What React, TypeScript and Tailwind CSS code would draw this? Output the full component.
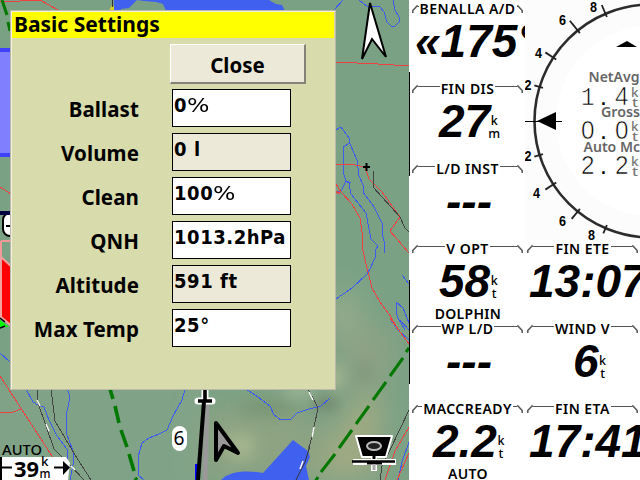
import type { ReactNode } from "react";

const UI = "font-['Noto_Sans',sans-serif]";

function Label({ x, y, w, size, children, fill = "#000", weight = 700, family = "Noto Sans, sans-serif" }: {
  x: number; y: number; w: number; size: number; children: ReactNode; fill?: string; weight?: number; family?: string;
}) {
  return (
    <text x={x} y={y} textLength={w} lengthAdjust="spacingAndGlyphs" fontSize={size} fontWeight={weight} fontFamily={family} fill={fill}>
      {children}
    </text>
  );
}

function MapView() {
  return (
    <svg className="block h-[480px] w-[409px]" viewBox="0 0 409 480" fill="none">
      <defs>
        <filter id="soft" x="-50%" y="-50%" width="200%" height="200%"><feGaussianBlur stdDeviation="14" /></filter>
        <filter id="soft2" x="-50%" y="-50%" width="200%" height="200%"><feGaussianBlur stdDeviation="7" /></filter>
      </defs>
      <rect width="409" height="480" fill="#7ba185" />
      <rect y="385" width="200" height="95" fill="#80a388" />
      <g filter="url(#soft)">
        <path d="M200 410L290 400L330 440L380 380L385 480L200 480Z" fill="#8da382" />
        <path d="M318 480L335 430L360 390L385 400L365 480Z" fill="#a0aa83" />
        <ellipse cx="344" cy="315" rx="14" ry="26" fill="#9aae8b" />
        <ellipse cx="368" cy="355" rx="26" ry="30" fill="#8fa284" />
      </g>
      <g filter="url(#soft2)">
        <ellipse cx="240" cy="446" rx="16" ry="14" fill="#a3b48e" />
        <ellipse cx="300" cy="391" rx="18" ry="6" fill="#a0b895" />
        <ellipse cx="336" cy="377" rx="7" ry="14" fill="#acb890" />
        <ellipse cx="325" cy="403" rx="13" ry="6" fill="#6e7e68" />
        <ellipse cx="267" cy="408" rx="30" ry="8" fill="#789675" />
        <ellipse cx="365" cy="372" rx="9" ry="12" fill="#84987c" />
      </g>
      <path d="M114 0H269L276 4L282 5L285 11H114Z" fill="#4060f0" />
      <path d="M121 11V9L129 8L137 0L144 1L156 2L163 4L166 11Z" fill="#7ba185" />
      <path d="M109.500 10L112 5L114 6V10Z" fill="#d8cf22" />
      <path d="M112.500 0V7" stroke="#333" />
      <path d="M0 2L40 0L58 10" stroke="#f04040" shapeRendering="crispEdges" />
      <path d="M2 0L7 15M8 22L10 31" stroke="#007800" strokeWidth="3" />
      <path d="M-4 50H20V155H-4Z" fill="#8080ff" stroke="#4040ff" strokeWidth="4" />
      <g stroke="#3c5cf0" shapeRendering="crispEdges">
        <path d="M334 10L343 0M359 0L367 6L380 7L384 12L387 22L391 26L395 26L400 21L399 17L395 10L393 0" />
        <path d="M336 130L341 127L349 138L350 144L357 160M350 143L343 147V172L346 181L351 183M357 160L359 176L363 185V192L374 207L382 223L382 233L384 241V253" />
        <path d="M337 191L341 191L346 181L349 183L351 194L366 213L369 229L371 239L378 246L375 251L375 258L370 269L367 274L352 288L336 299" />
        <path d="M402 275L409 284M409 323L403 308L396 302L396 311L398 318L405 330M391 320L398 330L409 340M400 320L409 330M409 442L402 462L398 480" />
        <path d="M0 353L10 362M26 389L33 402L38 405L44 407L49 420L57 436L67 449L68 455L65 470" />
        <path d="M67 389L70 396L69 402L66 416V432L73 451L74 460L70 480" />
        <path d="M185 389L182 400L173 416L167 430L159 434L149 438L142 443L138 457L138 475L144 480" />
        <path d="M246 389L258 397L270 406L274 415L281 420L291 419L297 413L309 409L321 406L330 398" />
      </g>
      <g stroke="#f04040" shapeRendering="crispEdges">
        <path d="M336 62L378 64L409 66M336 164H350L365 167L369 179L382 192L400 217L390 231L409 253" />
        <path d="M336 184L341 192L352 204L360 218L362 232V247L368 272L372 288L380 302L391 317L398 330M390 318L409 344" />
        <path d="M0 187L11 194M0 376L52 456L62 466M0 413L13 412L21 409" />
        <path d="M409 427L395 451L385 480M409 453L397 480" />
      </g>
      <path d="M336 192L340 193" stroke="#f04040" strokeWidth="2" />
      <g stroke="#444" shapeRendering="crispEdges">
        <path d="M374 171L373 187L400 217L405 228L409 232M51 389L55 421L75 455L91 480M37 389L38 403L54 449L70 465L84 480M409 410L390 450L382 466L380 480" />
        <path d="M308 389L317 406L317 413L309 449L296 480" />
      </g>
      <path d="M37 400L40 406M46 424L49 431M309 392L313 400M314 427L312 437M71 466L75 470" stroke="#fff" strokeWidth="1.4" />
      <path d="M110 389L113 399M115 406L119 423M121 430L127 447M129 454L134 471M135 478L137 480" stroke="#007800" strokeWidth="3.6" />
      <path d="M409 348L406 352M403 358L390 376M386 382L373 400M369 406L356 424M352 430L339 448M335 454L321 472M318 477L315 482" stroke="#007800" strokeWidth="3" />
      <path d="M221 480C229 471 247 470 263 473L293 440L308 451L310 457L306 466L309 480Z" fill="#4060f0" />
      <path d="M309 446L309 449L305 462L296 480" stroke="#333" />
      <path d="M303 461L300 469" stroke="#fff" strokeWidth="1.5" />
      <path d="M363 167H370M366.500 163V171" stroke="#000" strokeWidth="2" />
      <path d="M1 241H20M1 241V318" stroke="#f49a9a" strokeWidth="2" />
      <path d="M1 257L14 269V328L1 317Z" fill="#f00" stroke="#f5a0a0" strokeWidth="2" />
      <path d="M0 320L9 327L0 327Z" fill="#0f0" /><path d="M0 318L5 322M5 326L0 328" stroke="#000" strokeWidth="1.5" />
      <rect x="3" y="213" width="16" height="23" rx="7" fill="#fff" stroke="#000" strokeWidth="2" />
      <path d="M0 213H12" stroke="#000040" strokeWidth="4" /><path d="M6 226H12" stroke="#000" strokeWidth="2" />
      <path d="M370 3L386 57L372 39L362 59Z" fill="#fff" stroke="#000" strokeWidth="2" />
      <path d="M207 403L205 480" stroke="#999" strokeWidth="5" />
      <path d="M195 464V480H200V464Z" fill="#00f" />
      <path d="M205 389V401M198 401H212" stroke="#fff" strokeWidth="7" strokeLinecap="round" />
      <path d="M205 389V401M198 401H212" stroke="#000" strokeWidth="3.6" />
      <path d="M204 401L198 480" stroke="#000" strokeWidth="4" />
      <rect x="172" y="426" width="15" height="25" rx="7.500" fill="#fff" />
      <Label x={173.500} y={445} w={11} size={20} weight={400}>6</Label>
      <path d="M216 423L238 453L224 446L216 460Z" fill="#999" stroke="#000" strokeWidth="4" strokeLinejoin="round" />
      <g strokeLinejoin="round">
        <path d="M374 454V471M353 462H396" stroke="#fff" strokeWidth="6" />
        <path d="M356 436H392L386 457H362Z" fill="#000" stroke="#fff" strokeWidth="2" />
        <path d="M352 461.500H395" stroke="#000" strokeWidth="2.500" />
        <path d="M367 463H382" stroke="#000" strokeWidth="3" />
        <ellipse cx="374" cy="446" rx="7" ry="4" fill="#222" stroke="#bbb" strokeWidth="2" />
        <path d="M374 451V459" stroke="#000" strokeWidth="3" />
        <path d="M374 464V470" stroke="#aaa" strokeWidth="3" />
      </g>
      <Label x={2} y={455} w={40} size={13.500} weight={500}>AUTO</Label>
      <path d="M0 457H66L70 463L68 480H0Z" fill="#fff" />
      <path d="M1 457V480" stroke="#000" strokeWidth="2" />
      <path d="M0 467.500H12M54 467.500H65" stroke="#000" strokeWidth="2" />
      <path d="M63 461L70 467.500L63 475Z" fill="#000" />
      <Label x={14} y={477} w={25} size={21}>39</Label>
      <Label x={41} y={466} w={7.500} size={12} weight={500}>k</Label>
      <Label x={39.500} y={478} w={11} size={13} weight={500}>m</Label>
    </svg>
  );
}

const Percent = () => (
  <span className="inline-block origin-left scale-x-[1.18] font-['DejaVu_Sans',sans-serif] font-normal [font-stretch:normal]">%</span>
);

const fields = [
  { name: "Ballast", value: "0", percent: true, ro: false },
  { name: "Volume", value: "0 l", percent: false, ro: true },
  { name: "Clean", value: "100", percent: true, ro: false },
  { name: "QNH", value: "1013.2hPa", percent: false, ro: false },
  { name: "Altitude", value: "591 ft", percent: false, ro: true },
  { name: "Max Temp", value: "25°", percent: false, ro: false },
];

function Settings() {
  return (
    <section className={`absolute left-[10px] top-[10px] h-[380px] w-[326px] border border-[#bdb9aa] bg-[#d8dbab] text-[20.5px] font-bold leading-6 text-black shadow-[inset_1px_1px_0_#f3f0e2] ${UI}`}>
      <h1 className="mt-px ml-px h-[26px] w-[322px] bg-[#ffff00] pl-[2px] text-[21px] leading-[24px]">Basic Settings</h1>
      <button className="mt-[6px] ml-[159px] block h-10 w-[136px] border-t border-l border-r-2 border-b-2 border-t-white border-l-white border-r-[#85827a] border-b-[#85827a] bg-[#ece9d8] pt-[3px] font-bold">
        Close
      </button>
      <div className="mt-[5px] flex flex-col gap-[6px]">
        {fields.map((f) => (
          <div key={f.name} className="flex h-[38px]">
            <label className="w-[128px] pt-[8px] text-right tracking-[0.1px]">{f.name}</label>
            <div className={`ml-[33px] h-[38px] w-[119px] overflow-hidden border border-black pt-[3px] pl-[1px] font-['DejaVu_Sans_Condensed','DejaVu_Sans',sans-serif] text-[20px] tracking-[0.55px] whitespace-nowrap [font-stretch:condensed] ${f.ro ? "bg-[#ece9d8]" : "bg-white"}`}>
              {f.value}{f.percent && <Percent />}
            </div>
          </div>
        ))}
      </div>
    </section>
  );
}

type Box = { title: string; value: string; pad: string; unit?: string; note?: string };

const Corner = ({ flip = false }: { flip?: boolean }) => (
  <svg className={`h-2 w-[6px] shrink-0 ${flip ? "-scale-x-100" : ""}`} viewBox="0 0 6 8" fill="none" stroke="#555" strokeWidth="1.5">
    <path d="M0.800 8V5.500L5 1H6" />
  </svg>
);

function InfoBox({ title, value, pad, unit, note }: Box) {
  return (
    <div className="relative h-20 whitespace-nowrap">
      <div className="ml-[2px] flex h-[18px] w-[111px] items-start">
        <div className="mt-[5px] flex min-w-0 flex-1"><Corner /><i className="mt-[0.5px] h-[1.5px] flex-1 bg-[#555]" /></div>
        <span className={`px-px text-[14px] leading-[17px] font-semibold tracking-[0.45px] ${UI}`}>{title}</span>
        <div className="mt-[5px] flex min-w-0 flex-1"><i className="mt-[0.5px] h-[1.5px] flex-1 bg-[#555]" /><Corner flip /></div>
      </div>
      <div className={`flex h-[46px] ${pad}`}>
        <span className="font-['Liberation_Sans',Arial,sans-serif] text-[46px] leading-[46px] font-bold italic">{value}</span>
        {unit && (
          <span className={`mt-[17px] -ml-px flex w-[10px] flex-col items-center text-[12.5px] leading-[12.5px] font-medium ${UI}`}>
            <span>{unit[0]}</span><span>{unit[1]}</span>
          </span>
        )}
      </div>
      {note && <div className={`w-[116px] pt-px text-center text-[14px] leading-[17px] font-semibold tracking-[0.3px] ${UI}`}>{note}</div>}
    </div>
  );
}

const left: Box[] = [
  { title: "BENALLA A/D", value: "«175°", pad: "pl-[5px]" },
  { title: "FIN DIS", value: "27", pad: "pl-[29px]", unit: "km" },
  { title: "L/D INST", value: "---", pad: "pl-[36px]" },
  { title: "V OPT", value: "58", pad: "pl-[29px]", unit: "kt", note: "DOLPHIN" },
  { title: "WP L/D", value: "---", pad: "pl-[36px]" },
  { title: "MACCREADY", value: "2.2", pad: "pl-[23px]", unit: "kt", note: "AUTO" },
];
const right: Box[] = [
  { title: "FIN ETE", value: "13:07", pad: "pl-[4px]" },
  { title: "WIND V", value: "6", pad: "pl-[48px]", unit: "kt" },
  { title: "FIN ETA", value: "17:41", pad: "pl-[4px]" },
];

const readouts = [
  { y: 105, d: "1.4" },
  { y: 139, d: "0.0" },
  { y: 174, d: "2.2" },
];
const marks = [
  { t: "8", x: 65, y: 12, a: 67, o: 0 }, { t: "6", x: 34, y: 25, a: 51, o: -3 }, { t: "4", x: 10, y: 58, a: 33, o: 0 }, { t: "2", x: -0.5, y: 90, a: 17, o: 4 },
  { t: "2", x: -0.5, y: 161, a: -17, o: 4 }, { t: "4", x: 8, y: 198, a: -33, o: 0 }, { t: "6", x: 34, y: 226, a: -51, o: 0 }, { t: "8", x: 63, y: 239.5, a: -67, o: 4 },
];

function Vario() {
  return (
    <svg className="block h-60 w-[115px] bg-[#fcfcfc]" viewBox="0 0 115 240" fill="none">
      <circle cx="126" cy="121" r="95" fill="#fff" />
      <circle cx="126" cy="121" r="116.500" stroke="#2c2c2c" strokeWidth="2.600" />
      {marks.map((m) => (
        <g key={m.a}>
          <path d={`M${m.o} 121H13`} stroke="#222" strokeWidth="1.800" transform={`rotate(${m.a} 126 121)`} />
          <Label x={m.x} y={m.y} w={7} size={15} family="Liberation Sans Narrow, Liberation Sans">{m.t}</Label>
        </g>
      ))}
      <path d="M0 121.500H37" stroke="#000" />
      <path d="M12 121L31 112V130Z" fill="#000" />
      <path d="M91 47L102 41L112 47Z" fill="#000" />
      <rect x="54" y="86" width="61" height="20" fill="#fff" />
      <Label x={63.500} y={82} w={51} size={14} weight={600} fill="#666">NetAvg</Label>
      <Label x={76} y={117} w={39} size={14} weight={600} fill="#666">Gross</Label>
      <Label x={58.500} y={151.500} w={56.500} size={14} weight={600} fill="#666">Auto Mc</Label>
      {readouts.map((r) => (
        <g key={r.y}>
          {[r.d[0], r.d[2]].map((c, i) => (
            <text key={i} x={i ? 90 : 56} y={r.y} textLength="13.500" lengthAdjust="spacingAndGlyphs" fontSize="25" fill="#000" stroke="#fff" strokeWidth="0.600"
              fontFamily={c === "1" ? "Liberation Mono" : "Liberation Sans"}>{c}</text>
          ))}
          <text x="75" y={r.y} fontSize="25" fontFamily="Liberation Sans" fill="#000">.</text>
          <Label x={106} y={r.y - 8} w={7.500} size={12} weight={500} fill="#777">k</Label>
          <Label x={107} y={r.y + 2} w={6} size={12} weight={500} fill="#777">t</Label>
        </g>
      ))}
    </svg>
  );
}

export default function App() {
  return (
    <main className="flex h-[480px] w-[640px] overflow-hidden bg-white text-black">
      <div className="relative h-[480px] w-[409px] shrink-0">
        <MapView />
        <Settings />
      </div>
      <div className="w-px shrink-0 pt-[72px]">
        <div className="h-[104px] bg-black" />
        <div className="mt-[104px] h-[104px] bg-black" />
      </div>
      <div className="h-[480px] w-[115px] shrink-0 overflow-hidden">
        {left.map((b) => <InfoBox key={b.title} {...b} />)}
      </div>
      <div className="h-[480px] w-[115px] shrink-0 overflow-hidden">
        <Vario />
        {right.map((b) => <InfoBox key={b.title} {...b} />)}
      </div>
    </main>
  );
}
